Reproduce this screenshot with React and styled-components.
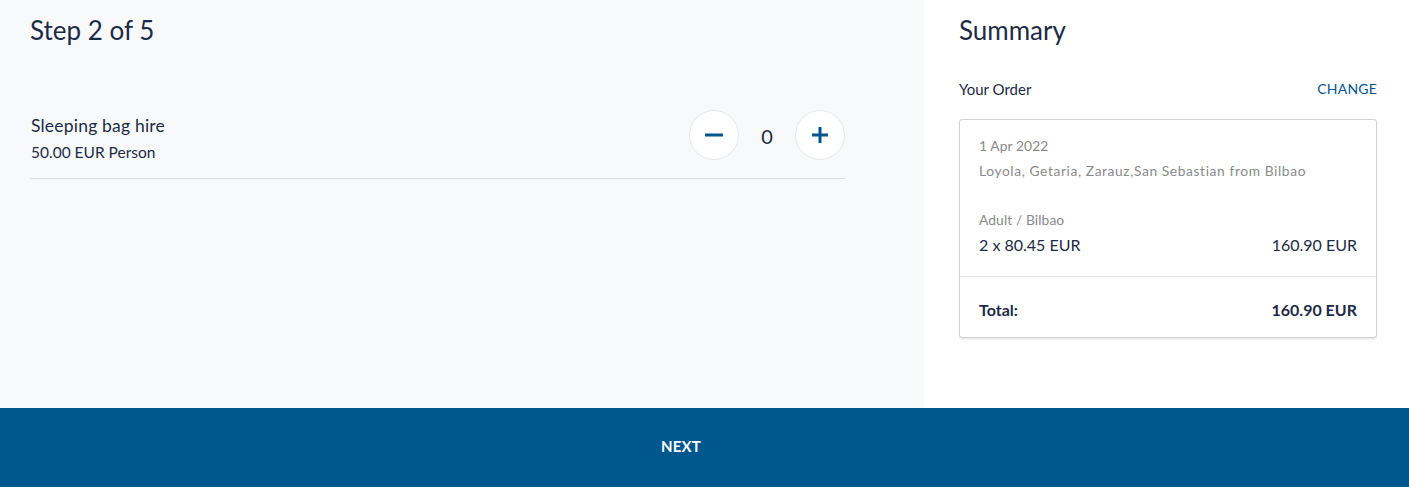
import React from "react";
import styled, { createGlobalStyle } from "styled-components";

const Global = createGlobalStyle`
  html, body { margin: 0; padding: 0; }
  body { font-family: "Lato", "Open Sans", sans-serif; color: #1c2b45; background: #fff; }
  * { box-sizing: border-box; }
`;

const Page = styled.div`
  width: 1409px;
  height: 487px;
  display: flex;
  flex-direction: column;
  overflow: hidden;
`;

const Main = styled.div`
  display: flex;
  height: 408px;
`;

const Left = styled.section`
  width: 924px;
  background: #f8f9fb;
  padding: 14px 79px 0 30px;
`;

const Right = styled.aside`
  flex: 1;
  background: #fff;
  padding: 14px 32px 0 35px;
`;

const Title = styled.h1`
  margin: 0;
  font-size: 26px;
  font-weight: 400;
  line-height: 32px;
  color: #1c2b45;
`;

const ItemRow = styled.div`
  margin-top: 69px;
  display: flex;
  align-items: center;
  justify-content: space-between;
  border-bottom: 1px solid #dcdde0;
  padding-bottom: 16px;
`;

const ItemInfo = styled.div`
  display: flex;
  flex-direction: column;
  gap: 5px;
  padding-left: 1px;
`;

const ItemName = styled.div`
  font-size: 17.5px;
  letter-spacing: 0.2px;
  line-height: 22px;
`;

const ItemPrice = styled.div`
  font-size: 15.5px;
  line-height: 20px;
`;

const Stepper = styled.div`
  display: flex;
  align-items: center;
  margin-top: -8px;
`;

const RoundButton = styled.button`
  width: 50px;
  height: 50px;
  border-radius: 50%;
  border: 1px solid #e6e7ea;
  background: #fff;
  display: flex;
  align-items: center;
  justify-content: center;
  padding: 0;
  cursor: pointer;
`;

const Count = styled.span`
  width: 56px;
  text-align: center;
  font-size: 20px;
  color: #1c2b45;
  padding-top: 2px;
`;

const OrderHead = styled.div`
  margin-top: 34px;
  display: flex;
  justify-content: space-between;
  align-items: center;
  font-size: 15px;
  line-height: 18px;
`;

const ChangeLink = styled.a`
  color: #00568f;
  font-size: 14px;
  letter-spacing: 0.2px;
  cursor: pointer;
`;

const Card = styled.div`
  margin-top: 21px;
  width: 418px;
  border: 1px solid #d2d3d6;
  border-radius: 3px;
  box-shadow: 0 1px 2px rgba(0, 0, 0, 0.12);
  background: #fff;
`;

const CardSection = styled.div`
  padding: ${(p) => p.$pad};
  border-top: ${(p) => (p.$divided ? "1px solid #e3e4e7" : "none")};
`;

const Muted = styled.div`
  font-size: 13.8px;
  line-height: 18px;
  color: #8a8a8a;
  letter-spacing: ${(p) => (p.$spread ? 0.6 : 0.1)}px;
  margin-top: ${(p) => p.$mt || 0}px;
`;

const LineRow = styled.div`
  display: flex;
  justify-content: space-between;
  font-size: 16px;
  font-weight: ${(p) => (p.$bold ? 700 : 400)};
  line-height: 22px;
  margin-top: ${(p) => p.$mt || 0}px;
  color: #1c2b45;
`;

const Footer = styled.footer`
  height: 79px;
  background: #00568f;
  display: flex;
  align-items: center;
  justify-content: center;
  padding: 0 47px 4px 0;
`;

const NextButton = styled.button`
  background: transparent;
  border: none;
  color: #fff;
  font-family: "Lato", "Open Sans", sans-serif;
  font-weight: 700;
  font-size: 15px;
  letter-spacing: 0.2px;
  cursor: pointer;
`;

export default function App() {
  return (
    <Page>
      <Global />
      <Main>
        <Left>
          <Title>Step 2 of 5</Title>
          <ItemRow>
            <ItemInfo>
              <ItemName>Sleeping bag hire</ItemName>
              <ItemPrice>50.00 EUR Person</ItemPrice>
            </ItemInfo>
            <Stepper>
              <RoundButton aria-label="decrease">
                <svg width="18" height="18" viewBox="0 0 18 18">
                  <rect x="0" y="7.5" width="18" height="3" fill="#00568f" />
                </svg>
              </RoundButton>
              <Count>0</Count>
              <RoundButton aria-label="increase">
                <svg width="16" height="16" viewBox="0 0 16 16">
                  <rect x="0" y="6.5" width="16" height="3" fill="#00568f" />
                  <rect x="6.5" y="0" width="3" height="16" fill="#00568f" />
                </svg>
              </RoundButton>
            </Stepper>
          </ItemRow>
        </Left>
        <Right>
          <Title>Summary</Title>
          <OrderHead>
            <span>Your Order</span>
            <ChangeLink>CHANGE</ChangeLink>
          </OrderHead>
          <Card>
            <CardSection $pad="17px 19px 20px">
              <Muted>1 Apr 2022</Muted>
              <Muted $mt={7} $spread>Loyola, Getaria, Zarauz,San Sebastian from Bilbao</Muted>
              <Muted $mt={31}>Adult / Bilbao</Muted>
              <LineRow $mt={5}>
                <span>2 x 80.45 EUR</span>
                <span>160.90 EUR</span>
              </LineRow>
            </CardSection>
            <CardSection $divided $pad="22px 19px 16px">
              <LineRow $bold>
                <span>Total:</span>
                <span>160.90 EUR</span>
              </LineRow>
            </CardSection>
          </Card>
        </Right>
      </Main>
      <Footer>
        <NextButton>NEXT</NextButton>
      </Footer>
    </Page>
  );
}
